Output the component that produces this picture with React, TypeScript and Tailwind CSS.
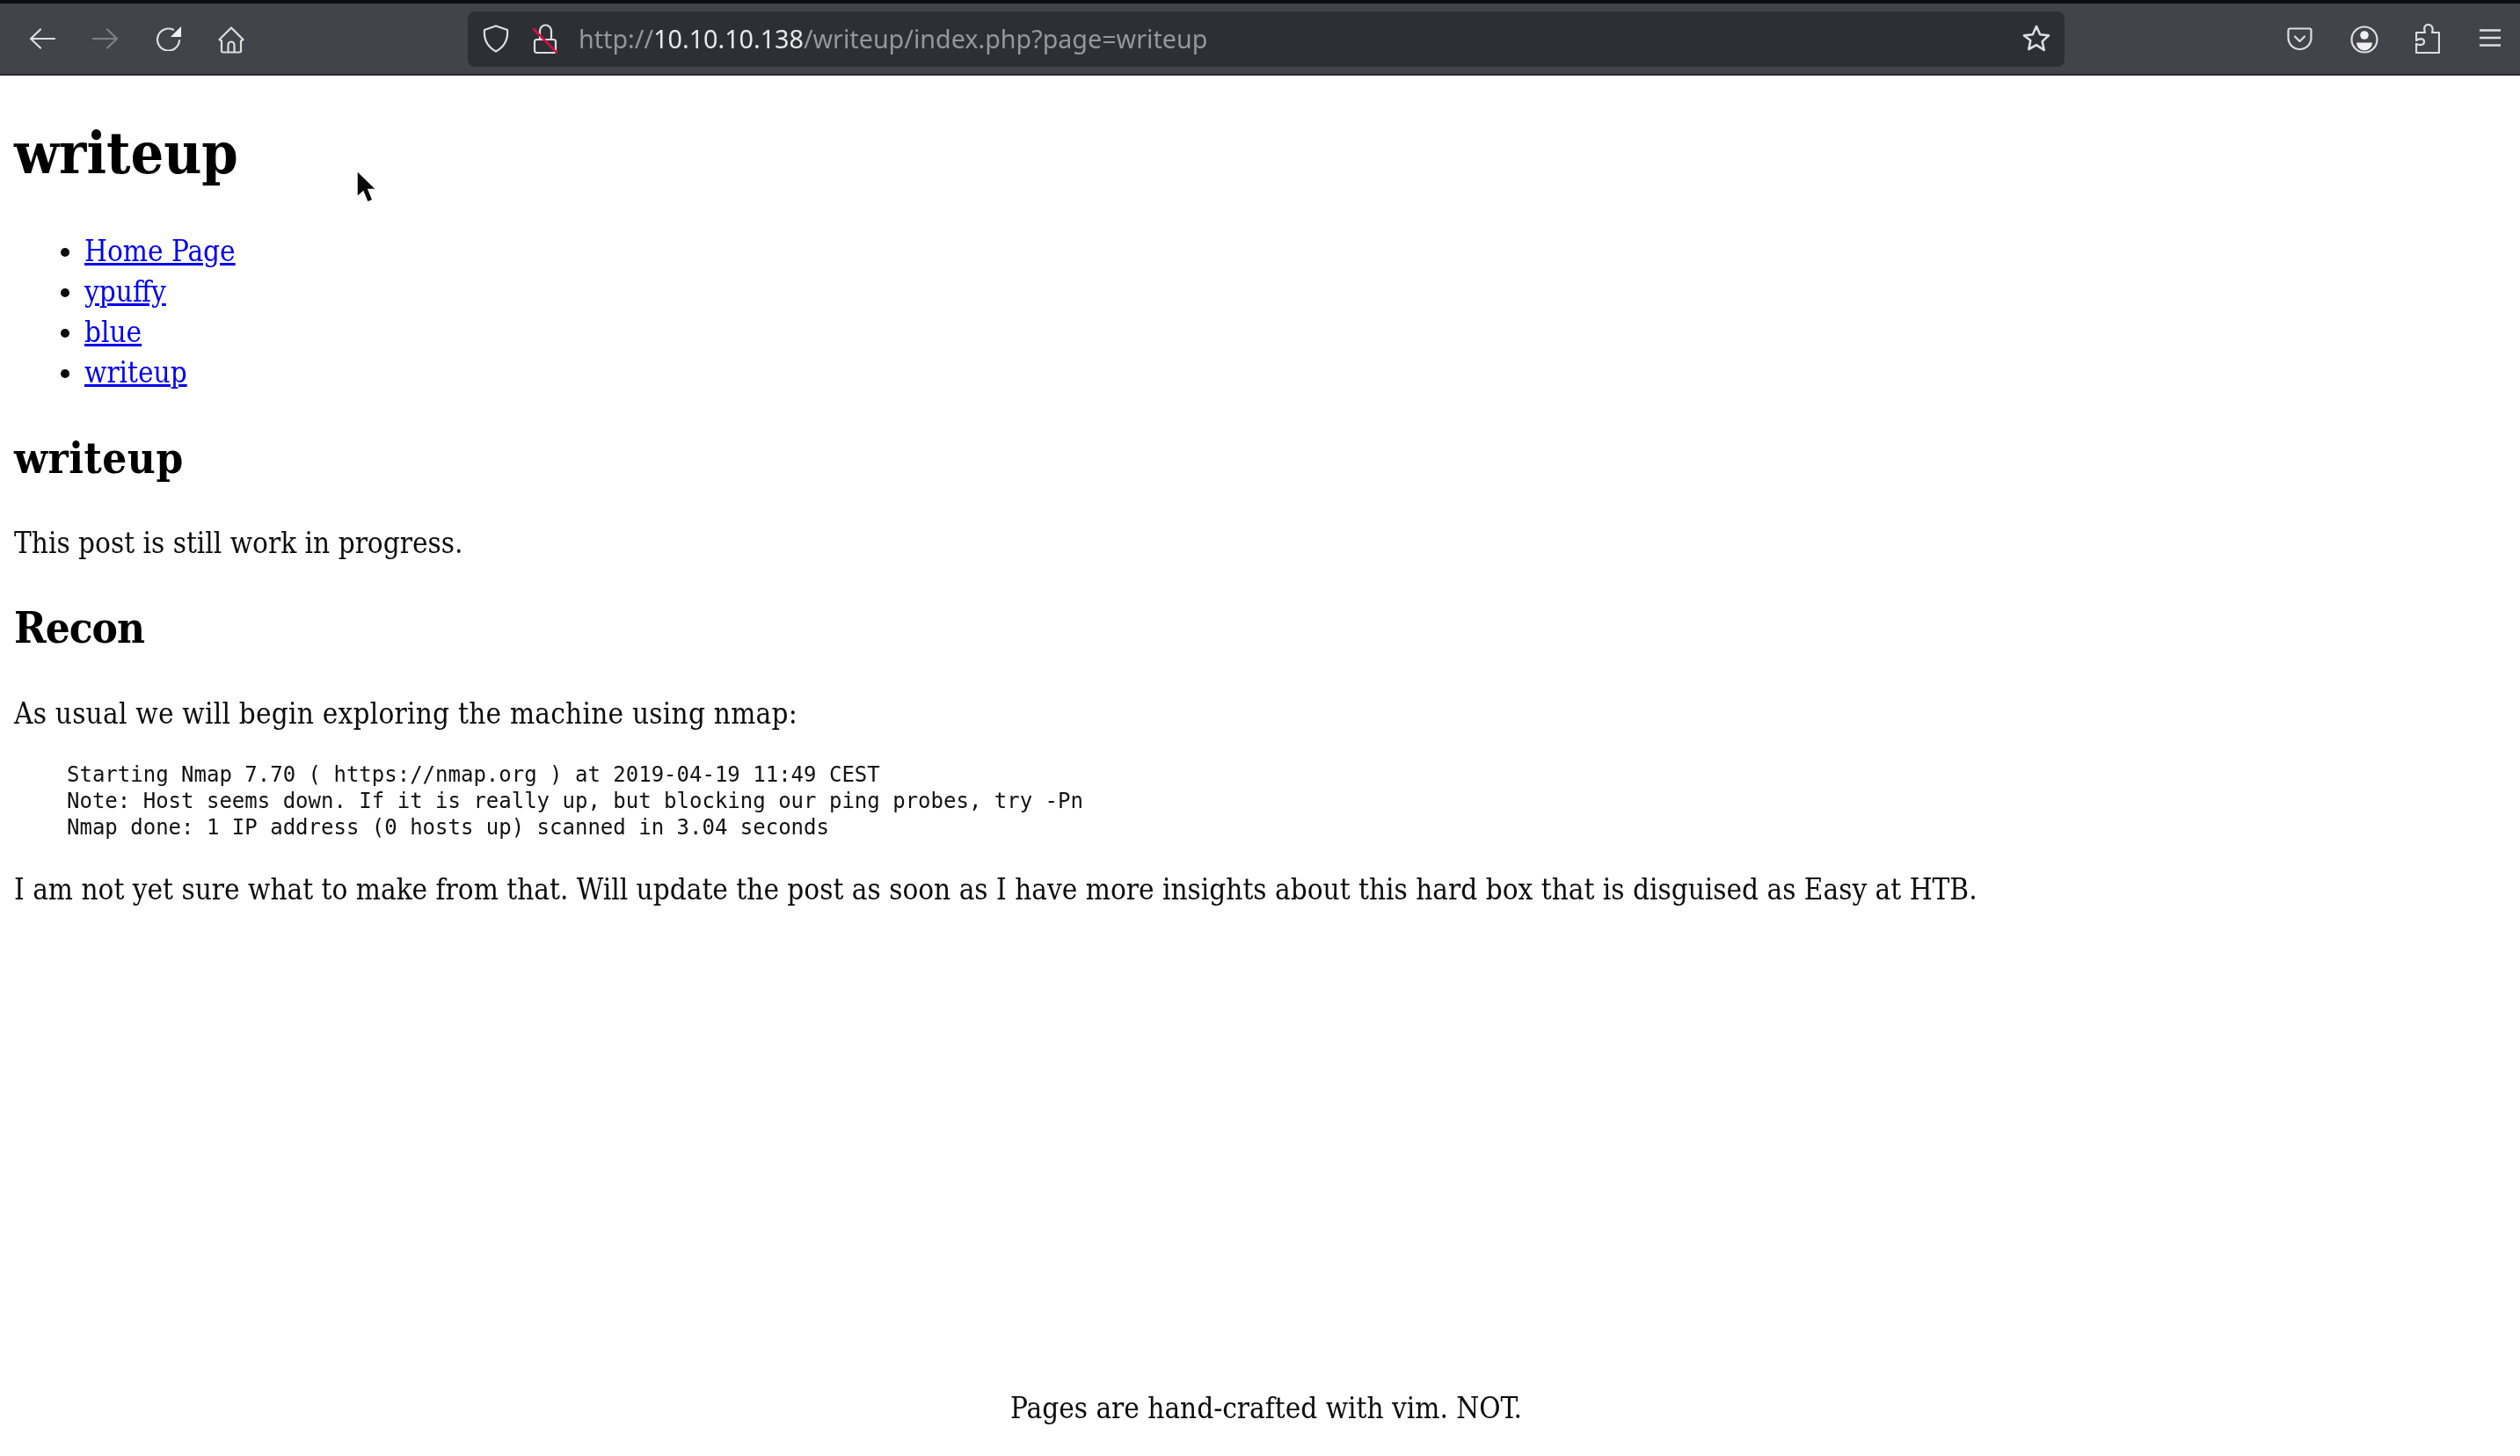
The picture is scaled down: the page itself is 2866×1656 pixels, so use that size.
const ic = "block shrink-0 fill-none stroke-[#dedee0] stroke-[2.2]";

function Back() {
  return (
    <svg width="30" height="24" viewBox="0 0 30 24" className={ic} strokeLinecap="round" strokeLinejoin="round">
      <path d="M2 12h27M13 1.5 2 12l11 10.5" />
    </svg>
  );
}

function Forward() {
  return (
    <svg width="30" height="24" viewBox="0 0 30 24" className={`${ic} ml-[42px] opacity-40`} strokeLinecap="round" strokeLinejoin="round">
      <path d="M1 12h27M17 1.5 28 12 17 22.5" />
    </svg>
  );
}

function Reload() {
  return (
    <svg width="30" height="28" viewBox="0 0 30 28" className={`${ic} ml-[42px]`} strokeLinecap="round" strokeLinejoin="round">
      <path d="M20 3.8A12.5 12.5 0 1 0 27 16" />
      <path d="M29 0v12H17z" className="fill-[#f0f0f2] stroke-0" />
    </svg>
  );
}

function Home() {
  return (
    <svg width="30" height="31" viewBox="0 0 30 31" className={`${ic} ml-[41px] mt-[3px]`} strokeLinejoin="round" strokeLinecap="round">
      <path d="M1.5 15 15 1.5 28.5 15 26 16.5V28a1.5 1.5 0 0 1-1.5 1.5h-19A1.5 1.5 0 0 1 4 28V16.5z" />
      <path d="M11.5 29V21a3.5 3.5 0 0 1 7 0v8" />
    </svg>
  );
}

function Shield() {
  return (
    <svg width="30" height="32" viewBox="0 0 30 32" className={ic} strokeLinejoin="round">
      <path d="M15 1.5 28 6c1 11-3 19-13 24.5C5 25 1 17 2 6z" />
    </svg>
  );
}

function BrokenLock() {
  return (
    <svg width="28" height="34" viewBox="0 0 28 34" className="ml-[27px] block shrink-0 fill-none stroke-[2.2]" strokeLinecap="round">
      <path d="M8 18V8a6.5 6.5 0 0 1 13 0v10" className="stroke-[#dedee0]" />
      <rect x="2" y="18" width="24" height="15" rx="2.5" className="stroke-[#dedee0]" />
      <path d="M1 6 27.5 33" className="stroke-[#d70f45] stroke-[2.6]" />
    </svg>
  );
}

function Star() {
  return (
    <svg width="32" height="32" viewBox="0 0 32 32" className={`${ic} ml-auto stroke-[2.6]`} strokeLinejoin="round">
      <path d="m16 2 4.2 9.2 9.8 1.2-7.3 6.7 2 9.9L16 23.2l-8.7 4.8 2-9.9L2 12.4l9.8-1.2z" />
    </svg>
  );
}

function Pocket() {
  return (
    <svg width="29" height="27" viewBox="0 0 29 27" className={`${ic} ml-[253px]`} strokeLinecap="round" strokeLinejoin="round">
      <path d="M3.5 1.5h22a2 2 0 0 1 2 2V12a13 13 0 0 1-26 0V3.5a2 2 0 0 1 2-2z" />
      <path d="m9 10.5 5.5 5.5 5.5-5.5" />
    </svg>
  );
}

function Account() {
  return (
    <svg width="32" height="32" viewBox="0 0 32 32" className={`${ic} ml-[43px] mt-[2px]`}>
      <circle cx="16" cy="16" r="14.5" />
      <circle cx="16" cy="11" r="4.8" className="fill-[#f0f0f2] stroke-0" />
      <path d="M7 19.5h18a9 9 0 0 1-18 0z" className="fill-[#f0f0f2] stroke-0" />
    </svg>
  );
}

function Puzzle() {
  return (
    <svg width="28" height="34" viewBox="0 0 28 34" className={`${ic} ml-[42px]`} strokeLinejoin="round">
      <path d="M1 33H27V10H19C21 4 18 1 14.5 1S9 4 11 10H1V19C6 16 10 17 10 20.5S6 25 1 23Z" />
    </svg>
  );
}

function Menu() {
  return (
    <svg width="26" height="20" viewBox="0 0 26 20" className="ml-[44px] -mt-[2px] block shrink-0 stroke-[#dedee0] stroke-[2.4]">
      <path d="M1 1.5h24M1 10h24M1 18.5h24" />
    </svg>
  );
}

function Cursor() {
  return (
    <svg width="26" height="44" viewBox="0 0 26 44" className="absolute left-[404px] top-[192px]">
      <path d="M2 2v30l7-6 5 12 6-2.5-5-12h9z" fill="#0a0a0a" stroke="#ffffff" strokeWidth="1.5" />
    </svg>
  );
}

function Toolbar() {
  return (
    <div className="h-[86px] shrink-0 bg-[#0c0d12] pt-1">
      <div className="flex h-[82px] items-center border-b-2 border-[#2b2c30] bg-[#42444c] pl-[33px]">
        <Back />
        <Forward />
        <Reload />
        <Home />
        <div className="ml-[254px] flex h-[63px] w-[1816px] shrink-0 items-center rounded-lg bg-[#2e2f35] pl-[17px] pr-[16px] font-['Noto_Sans',sans-serif] text-[28.7px] text-[#96979b]">
          <Shield />
          <BrokenLock />
          <span className="ml-[24px]">
            http://<span className="text-[#e8e8ea]">10.10.10.138</span>/writeup/index.php?page=writeup
          </span>
          <Star />
        </div>
        <Pocket />
        <Account />
        <Puzzle />
        <Menu />
      </div>
    </div>
  );
}

export default function App() {
  return (
    <div className="relative flex h-[1656px] flex-col overflow-hidden bg-white font-['DejaVu_Serif_Condensed','DejaVu_Serif',serif] text-[33px] leading-[46px] text-[#0c0c0c] blur-[0.5px]">
      <Toolbar />
      <main className="flex flex-1 flex-col px-4">
        <h1 className="mt-[60px] text-[66px] leading-[56px] font-bold text-black">writeup</h1>
        <ul className="mt-[61px] list-disc pl-[80px]">
          {["Home Page", "ypuffy", "blue", "writeup"].map((t) => (
            <li key={t}>
              <a className="text-[#0000ee] underline">{t}</a>
            </li>
          ))}
        </ul>
        <h2 className="mt-[49px] text-[49px] leading-[50px] font-bold tracking-[0.5px] text-black">writeup</h2>
        <p className="mt-[49px]">This post is still work in progress.</p>
        <h2 className="mt-[48px] text-[49px] leading-[50px] font-bold tracking-[-1px] text-black">Recon</h2>
        <p className="mt-[50px] tracking-[0.23px]">As usual we will begin exploring the machine using nmap:</p>
        <pre className="mt-[31px] pl-[60px] font-['DejaVu_Sans_Mono',monospace] text-[24px] leading-[30px] text-[#111]">{`Starting Nmap 7.70 ( https://nmap.org ) at 2019-04-19 11:49 CEST
Note: Host seems down. If it is really up, but blocking our ping probes, try -Pn
Nmap done: 1 IP address (0 hosts up) scanned in 3.04 seconds`}</pre>
        <p className="mt-[33px]">I am not yet sure what to make from that. Will update the post as soon as I have more insights about this hard box that is disguised as Easy at HTB.</p>
        <footer className="mt-auto mb-[31px] pl-[14px] text-center">Pages are hand-crafted with vim. NOT.</footer>
      </main>
      <Cursor />
    </div>
  );
}
